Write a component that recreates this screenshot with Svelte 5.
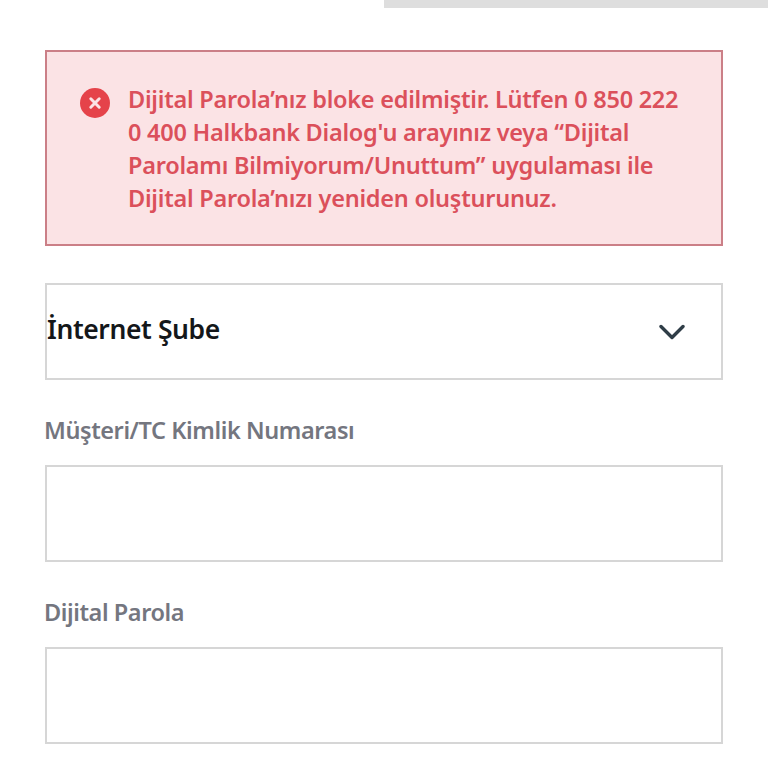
<script>
	let customerNo = '';
	let password = '';
</script>

<div class="page">
	<div class="progress"><span></span></div>

	<div class="alert">
		<svg class="alert-icon" width="30" height="30" viewBox="0 0 30 30">
			<circle cx="15" cy="15" r="15" fill="#e5434a" />
			<path d="M10.8 10.8 19.2 19.2M19.2 10.8 10.8 19.2" stroke="#fbe3e5" stroke-width="3" stroke-linecap="round" />
		</svg>
		<p>
			Dijital Parola’nız bloke edilmiştir. Lütfen 0 850 222<br />
			0 400 Halkbank Dialog'u arayınız veya “Dijital<br />
			Parolamı Bilmiyorum/Unuttum” uygulaması ile<br />
			Dijital Parola’nızı yeniden oluşturunuz.
		</p>
	</div>

	<div class="select">
		<span>İnternet Şube</span>
		<svg width="26" height="16" viewBox="0 0 26 16">
			<path d="M2 2.5 13 13.5 24 2.5" fill="none" stroke="#2f3d47" stroke-width="3.4" stroke-linecap="round" stroke-linejoin="round" />
		</svg>
	</div>

	<label class="field">
		<span>Müşteri/TC Kimlik Numarası</span>
		<input type="text" bind:value={customerNo} />
	</label>

	<label class="field">
		<span>Dijital Parola</span>
		<input type="password" bind:value={password} />
	</label>
</div>

<style>
	:global(body) {
		background: #fff;
		font-family: "Noto Sans", "Open Sans", sans-serif;
	}

	.page {
		height: 768px;
		overflow: hidden;
		box-sizing: border-box;
		padding: 0 45px;
	}

	.progress {
		display: flex;
		justify-content: flex-end;
		margin: 0 -45px 42px;
	}
	.progress span {
		width: 384px;
		height: 8px;
		background: #dedede;
	}

	.alert {
		box-sizing: border-box;
		height: 196px;
		display: flex;
		gap: 18px;
		padding: 30px 17px 0 33px;
		background: #fbe3e5;
		border: 2px solid #cb7f87;
	}
	.alert-icon {
		flex: none;
		margin-top: 6px;
	}
	.alert p {
		margin: 1px 0 0;
		font-size: 23.5px;
		font-weight: 600;
		line-height: 33px;
		letter-spacing: -0.25px;
		color: #db505b;
		white-space: nowrap;
	}

	.select {
		box-sizing: border-box;
		height: 97px;
		margin-top: 37px;
		display: flex;
		align-items: center;
		justify-content: space-between;
		padding: 0 36px 0 0;
		border: 2px solid #d6d6d6;
		font-size: 26.5px;
		font-weight: 600;
		letter-spacing: -0.4px;
		color: #14171a;
	}
	.select span {
		margin-bottom: 6px;
	}

	.field {
		display: flex;
		flex-direction: column;
		margin-top: 32px;
	}
	.field span {
		margin-left: -1px;
		font-size: 23.5px;
		font-weight: 600;
		line-height: 36px;
		letter-spacing: -0.42px;
		color: #74767f;
		margin-bottom: 17px;
	}
	.field input {
		box-sizing: border-box;
		height: 97px;
		border: 2px solid #d6d6d6;
		background: #fff;
		outline: none;
	}
</style>
